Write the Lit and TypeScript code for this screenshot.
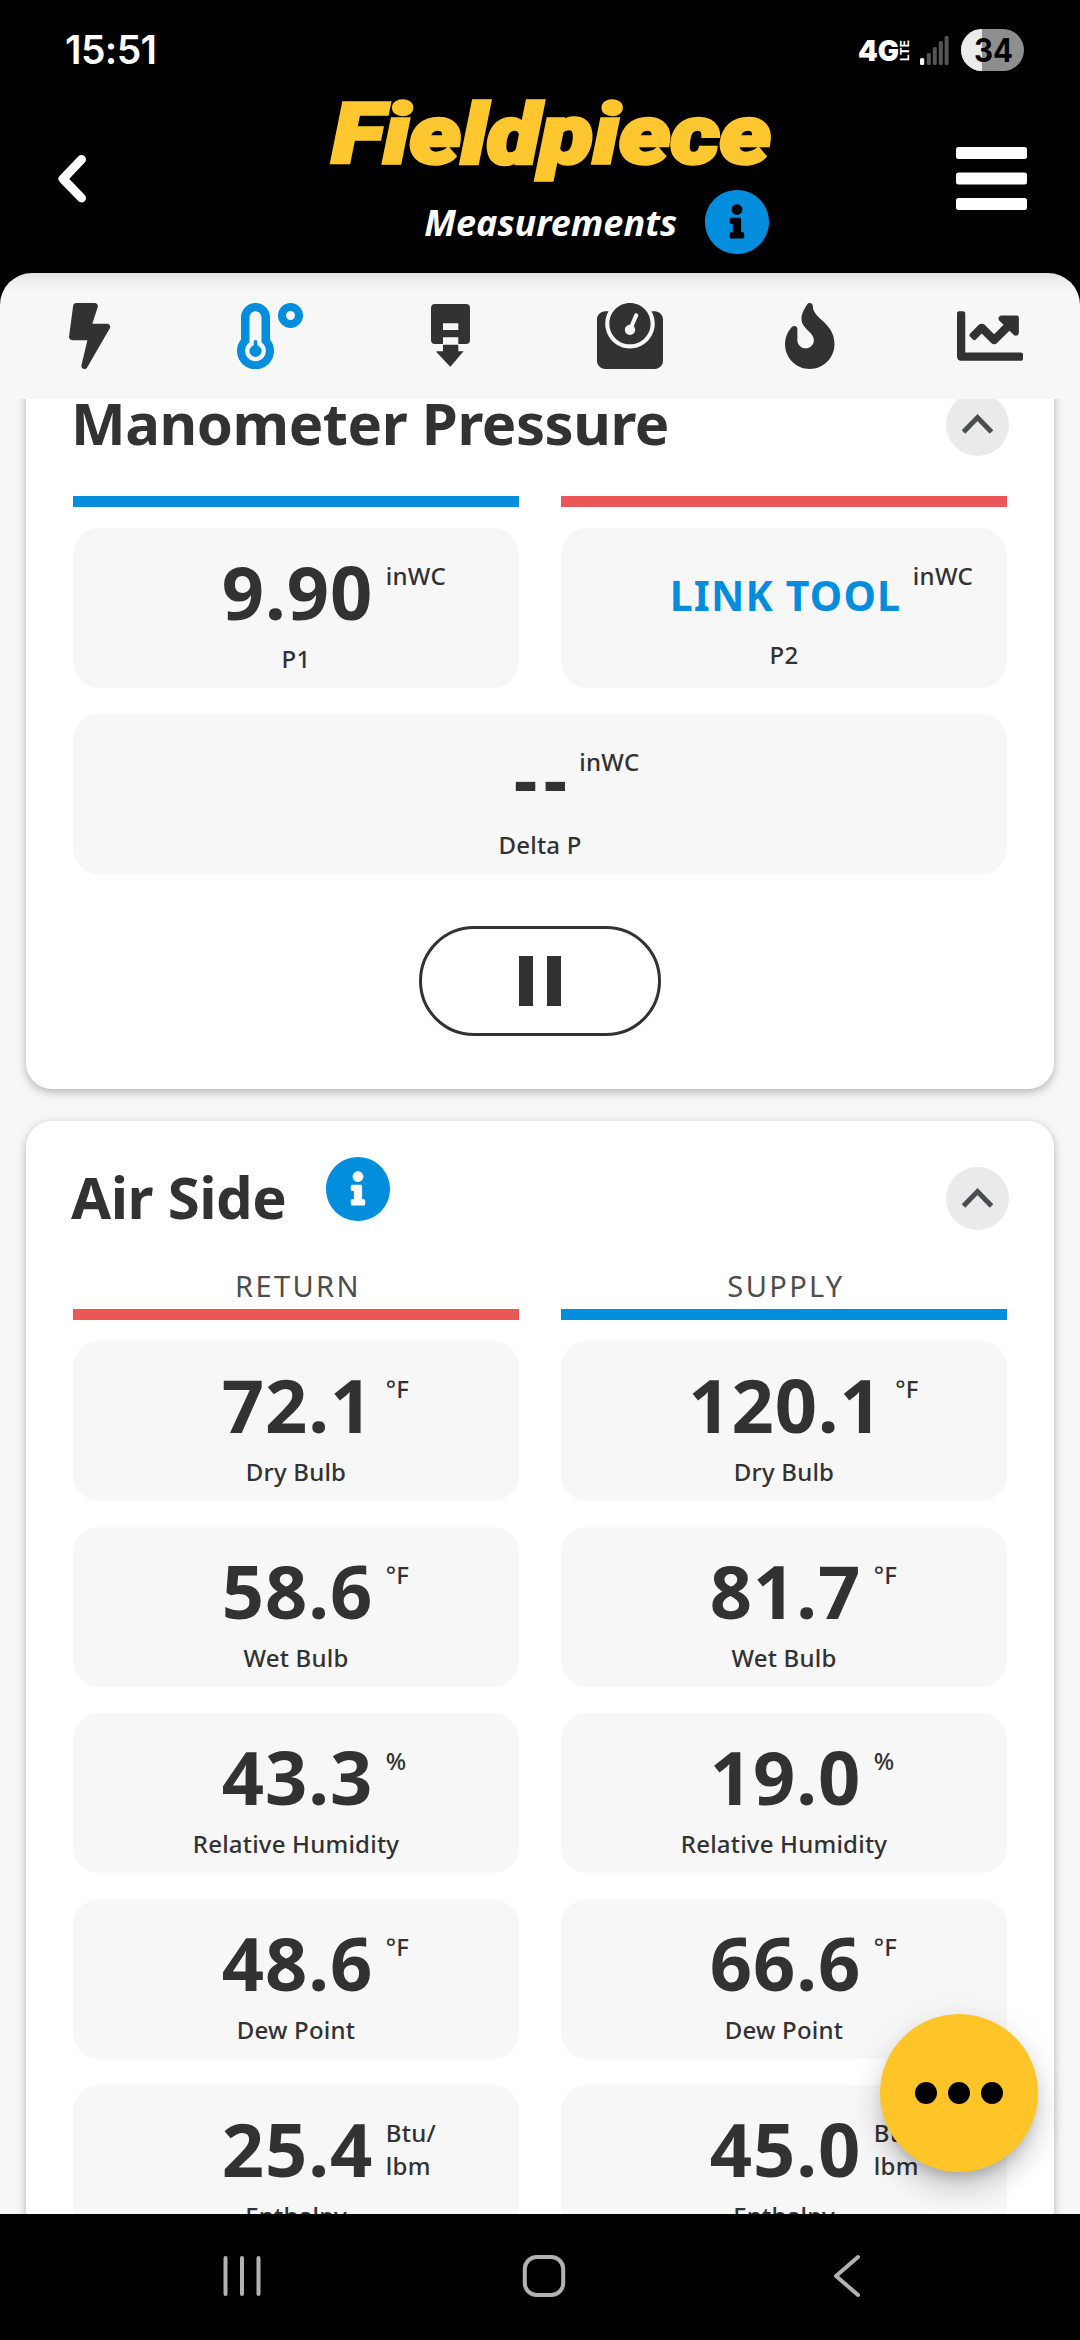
import { LitElement, html, css, svg, nothing } from "lit";
import { customElement, property } from "lit/decorators.js";

const BLUE = "#028ddd";
const INFO_PATH =
  "M256 8C119.043 8 8 119.083 8 256c0 136.997 111.043 248 248 248s248-111.003 248-248C504 119.083 392.957 8 256 8zm0 110c23.196 0 42 18.804 42 42s-18.804 42-42 42-42-18.804-42-42 18.804-42 42-42zm56 254c0 6.627-5.373 12-12 12h-88c-6.627 0-12-5.373-12-12v-24c0-6.627 5.373-12 12-12h12v-64h-12c-6.627 0-12-5.373-12-12v-24c0-6.627 5.373-12 12-12h64c6.627 0 12 5.373 12 12v100h12c6.627 0 12 5.373 12 12v24z";

const infoIcon = () => html`<svg width="64" height="64" viewBox="8 8 496 496" fill=${BLUE}><path d=${INFO_PATH}></path></svg>`;

interface Reading {
  value: string;
  unit: string[];
  label: string;
  kind?: "link" | "empty";
}

@customElement("reading-tile")
export class ReadingTile extends LitElement {
  @property({ attribute: false }) reading!: Reading;

  static styles = css`
    :host {
      display: block;
      height: 160px;
      box-sizing: border-box;
      padding-top: 14px;
      border-radius: 26px;
      background: #f7f7f7;
      color: #323232;
      text-align: center;
    }
    .line {
      display: grid;
      grid-template-columns: 1fr auto 1fr;
      height: 99px;
    }
    .value {
      grid-column: 2;
      margin-left: 3px;
      font-size: 74px;
      line-height: 99px;
      font-weight: 700;
      letter-spacing: 0.9px;
      white-space: nowrap;
    }
    .unit {
      grid-column: 3;
      justify-self: start;
      padding: 17px 0 0 12.5px;
      font-size: 24px;
      line-height: 33px;
      font-weight: 500;
      letter-spacing: 0.3px;
      text-align: left;
    }
    .label {
      font-size: 24px;
      line-height: 35px;
      font-weight: 500;
      letter-spacing: 0.2px;
    }
    .empty .value {
      margin-left: 7px;
      letter-spacing: 6px;
    }
    .empty .unit {
      padding-left: 6px;
    }
    .link .line {
      height: 95px;
    }
    .link .value {
      font-size: 41px;
      line-height: 107px;
      letter-spacing: 1.2px;
      color: #028ddd;
    }
    .link .unit {
      padding-left: 11.5px;
    }
  `;

  render() {
    const r = this.reading;
    return html`<div class=${r.kind ?? "plain"}>
      <div class="line">
        <span class="value">${r.value}</span>
        <span class="unit">${r.unit.map((u, i) => html`${i ? html`<br />` : nothing}${u}`)}</span>
      </div>
      <div class="label">${r.label}</div>
    </div>`;
  }
}

@customElement("section-card")
export class SectionCard extends LitElement {
  @property() heading = "";
  @property({ type: Boolean }) info = false;

  static styles = css`
    :host {
      display: block;
      border-radius: 26px;
      background: #fff;
      box-shadow: 0 3px 10px rgba(0, 0, 0, 0.28);
      padding: 0 47px;
    }
    .head {
      display: flex;
      align-items: center;
      height: 149px;
      box-sizing: border-box;
      padding: 5px 0 0;
    }
    .title {
      margin: -3px 0 0 -2px;
      font-size: 58px;
      line-height: 80px;
      font-weight: 700;
      letter-spacing: -0.45px;
      color: #323232;
      white-space: nowrap;
    }
    .info {
      display: flex;
      margin: -18px 0 0 40px;
    }
    .toggle {
      display: flex;
      margin: 0 -2px 0 auto;
    }
    svg {
      display: block;
    }
  `;

  render() {
    return html`<div class="head">
        <div class="title">${this.heading}</div>
        ${this.info ? html`<span class="info">${infoIcon()}</span>` : nothing}
        <span class="toggle">
          <svg width="63" height="63" viewBox="0 0 63 63">
            <circle cx="31.5" cy="31.5" r="31.5" fill="#eaeaea"></circle>
            <path d="M17.5 39L31.5 24.5L45.5 39" fill="none" stroke="#4b4d50" stroke-width="5"></path>
          </svg>
        </span>
      </div>
      <slot></slot>`;
  }
}

const AIR: Reading[] = [
  { value: "72.1", unit: ["°F"], label: "Dry Bulb" },
  { value: "120.1", unit: ["°F"], label: "Dry Bulb" },
  { value: "58.6", unit: ["°F"], label: "Wet Bulb" },
  { value: "81.7", unit: ["°F"], label: "Wet Bulb" },
  { value: "43.3", unit: ["%"], label: "Relative Humidity" },
  { value: "19.0", unit: ["%"], label: "Relative Humidity" },
  { value: "48.6", unit: ["°F"], label: "Dew Point" },
  { value: "66.6", unit: ["°F"], label: "Dew Point" },
  { value: "25.4", unit: ["Btu/", "lbm"], label: "Enthalpy" },
  { value: "45.0", unit: ["Btu/", "lbm"], label: "Enthalpy" },
];

const TABS = [
  svg`<svg width="41.25" height="66" viewBox="0 0 320 512"><path d="M296 160H180.6l42.6-129.8C227.2 15 215.7 0 200 0H56C44 0 33.8 8.9 32.2 20.8l-32 240C-1.7 275.2 9.5 288 24 288h118.7L96.6 482.5c-3.6 15.2 8 29.5 23.3 29.5 8.4 0 16.4-4.4 20.8-12l176-304c9.3-15.9-2.2-36-20.7-36z"/></svg>`,
  svg`<svg width="66" height="66" viewBox="0 0 66 66"><path fill="#028ddd" fill-rule="evenodd" d="M4 14.5a14.5 14.5 0 0 1 29 0V36.4a18.5 18.5 0 1 1-29 0ZM12.5 14.3V39.3a10.4 10.4 0 1 0 12 0V14.3a6 6 0 0 0-12 0Z"/><path fill="#028ddd" d="M16.7 38.8a1.8 1.8 0 0 1 3.6 0V42.2a6 6 0 1 1-3.6 0Z"/><circle cx="53.5" cy="12.5" r="8.5" fill="none" stroke="#028ddd" stroke-width="8"/></svg>`,
  svg`<svg width="39" height="66" viewBox="0 0 39 66"><path fill-rule="evenodd" d="M4 1H35a4 4 0 0 1 4 4V37a4 4 0 0 1-4 4H27.3V34.3H12V41H4a4 4 0 0 1-4-4V5A4 4 0 0 1 4 1ZM12 20.3H27.3V27H12Z"/><path d="M12 41.7H27.3V48.3H32.6L19.6 63.5Q19.3 63.8 19 63.5L5.6 49.3Q5 48.3 6 48.3H12Z"/></svg>`,
  svg`<svg width="66" height="66" viewBox="0 0 512 512"><path d="M448 64h-25.98C438.44 92.28 448 125.01 448 160c0 105.87-86.13 192-192 192S64 265.87 64 160c0-34.99 9.56-67.72 25.98-96H64C28.71 64 0 92.71 0 128v320c0 35.29 28.71 64 64 64h384c35.29 0 64-28.71 64-64V128c0-35.29-28.71-64-64-64zM256 320c88.37 0 160-71.63 160-160S344.37 0 256 0 96 71.63 96 160s71.63 160 160 160zm-.3-151.94l33.58-78.36c3.5-8.17 12.94-11.92 21.03-8.41 8.12 3.48 11.88 12.89 8.41 21l-33.67 78.55C291.73 188 296 197.45 296 208c0 22.09-17.91 40-40 40s-40-17.91-40-40c0-21.98 17.76-39.77 39.7-39.94z"/></svg>`,
  svg`<svg width="49.5" height="66" viewBox="0 0 384 512"><path d="M216 23.86c0-23.8-30.65-32.77-44.15-13.04C48 191.85 224 200 224 288c0 35.63-29.11 64.46-64.85 63.99-35.17-.45-63.15-29.77-63.15-64.94v-85.51c0-21.7-26.47-32.23-41.43-16.5C27.8 213.16 0 261.33 0 320c0 105.87 86.13 192 192 192s192-86.13 192-192c0-170.29-168-193-168-296.14z"/></svg>`,
  svg`<svg width="66" height="66" viewBox="0 0 512 512"><path d="M496 384H64V80c0-8.84-7.16-16-16-16H16C7.16 64 0 71.16 0 80v336c0 17.67 14.33 32 32 32h464c8.84 0 16-7.16 16-16v-32c0-8.84-7.16-16-16-16zM464 96H345.94c-21.38 0-32.09 25.85-16.97 40.97l32.4 32.4L288 242.75l-73.37-73.37c-12.5-12.5-32.76-12.5-45.25 0l-68.69 68.69c-6.25 6.25-6.25 16.38 0 22.63l22.62 22.62c6.25 6.25 16.38 6.25 22.63 0L192 237.25l73.37 73.37c12.5 12.5 32.76 12.5 45.25 0l96-96 32.4 32.4c15.12 15.12 40.97 4.41 40.97-16.97V112c.01-8.84-7.15-16-15.99-16z"/></svg>`,
];

@customElement("app-root")
export class AppRoot extends LitElement {
  static styles = css`
    :host {
      display: flex;
      flex-direction: column;
      position: relative;
      width: 1080px;
      height: 2340px;
      overflow: hidden;
      background: #000;
      color: #323232;
      font-family: "Noto Sans", "Open Sans", sans-serif;
    }
    svg {
      display: block;
    }
    .status {
      display: flex;
      align-items: flex-start;
      justify-content: space-between;
      height: 90px;
      flex: none;
      padding: 0 56px 0 65px;
      color: #fff;
    }
    .clock {
      margin-top: 26px;
      font-family: Inter, Roboto, sans-serif;
      font-size: 39px;
      line-height: 48px;
      font-weight: 600;
      letter-spacing: -0.6px;
    }
    .header {
      display: grid;
      grid-template-columns: 330px 441px 1fr;
      height: 183px;
      flex: none;
    }
    .back {
      padding: 65px 0 0 58px;
    }
    .brand {
      display: flex;
      flex-direction: column;
    }
    .logo {
      overflow: visible;
    }
    .sub {
      display: flex;
      justify-content: flex-end;
      align-items: center;
      height: 64px;
      margin: 0 2px 0 0;
      gap: 28px;
      color: #fff;
      font-size: 36px;
      line-height: 50px;
      font-weight: 700;
      font-style: italic;
    }
    .sub span {
      padding-top: 1px;
    }
    .menu {
      display: flex;
      justify-content: flex-end;
      padding: 57px 53px 0 0;
    }
    .tabs {
      display: grid;
      grid-template-columns: repeat(6, 180px);
      justify-items: center;
      height: 126px;
      flex: none;
      box-sizing: border-box;
      padding-top: 30px;
      border-radius: 32px 32px 0 0;
      background: linear-gradient(#e1e1e1, #f0f0f0 9px, #f7f7f7 19px);
      fill: #323232;
    }
    .content {
      flex: 1;
      min-height: 0;
      overflow: hidden;
      display: flex;
      flex-direction: column;
      gap: 32px;
      padding: 0 26px;
      background: #f7f7f7;
    }
    section-card {
      flex: none;
    }
    .first {
      margin-top: -52px;
      padding-bottom: 53px;
    }
    .grid {
      display: grid;
      grid-template-columns: 446px 446px;
      column-gap: 42px;
      row-gap: 26px;
    }
    .wide {
      grid-column: 1 / 3;
    }
    .bar {
      height: 11px;
      margin-bottom: -5px;
    }
    .red {
      background: #ea5756;
    }
    .blue {
      background: #028ddd;
    }
    .heads {
      display: grid;
      grid-template-columns: 446px 446px;
      column-gap: 42px;
      height: 39px;
      font-size: 29px;
      line-height: 32px;
      letter-spacing: 2.4px;
      text-align: center;
      color: #4d4d4d;
    }
    .heads span {
      padding-left: 4px;
    }
    .pause {
      display: flex;
      align-items: center;
      justify-content: center;
      gap: 14px;
      width: 242px;
      height: 110px;
      box-sizing: border-box;
      margin: 52px auto 0;
      border: 3px solid #323232;
      border-radius: 55px;
    }
    .pause i {
      width: 14px;
      height: 50px;
      background: #323232;
    }
    .nav {
      height: 126px;
      flex: none;
    }
    .fab {
      position: absolute;
      left: 880px;
      top: 2014px;
      width: 158px;
      height: 158px;
      border-radius: 50%;
      background: #fec428;
      box-shadow: 0 10px 14px -6px rgba(0, 0, 0, 0.2), 0 17px 28px rgba(0, 0, 0, 0.14), 0 6px 40px rgba(0, 0, 0, 0.08);
      clip-path: inset(-60px -60px -42px -60px);
      display: flex;
      align-items: center;
      justify-content: center;
      gap: 11px;
    }
    .fab i {
      width: 22px;
      height: 22px;
      border-radius: 50%;
      background: #000;
    }
  `;

  render() {
    return html`
      <div class="status">
        <span class="clock">15:51</span>
        <svg width="168" height="90" viewBox="856 0 168 90">
          <g fill="#fff" font-family="Inter, sans-serif" font-weight="900">
            <text x="858" y="61" font-size="28.5" textLength="41" lengthAdjust="spacingAndGlyphs">4G</text>
            <text transform="translate(908.5 61) rotate(-90)" x="0" y="0" font-size="12" font-weight="700" textLength="21" lengthAdjust="spacingAndGlyphs">LTE</text>
          </g>
          <g fill="#555">
            <rect x="920" y="58" width="4.2" height="7" rx="1.5" fill="#fff"></rect>
            <rect x="926.8" y="53" width="4" height="12" rx="1.5"></rect>
            <rect x="932.8" y="47" width="4" height="18" rx="1.5"></rect>
            <rect x="938.8" y="41" width="4" height="24" rx="1.5"></rect>
            <rect x="944.6" y="36" width="4" height="29" rx="1.5"></rect>
          </g>
          <rect x="961" y="29" width="63" height="42" rx="21" fill="#8e8e8e"></rect>
          <path d="M982 29A21 21 0 0 0 982 71Z" fill="#ebebeb"></path>
          <text x="974" y="62" font-family="Inter, sans-serif" font-size="32" font-weight="700" fill="#000" textLength="39" lengthAdjust="spacingAndGlyphs">34</text>
        </svg>
      </div>
      <div class="header">
        <div class="back">
          <svg width="28" height="48" viewBox="0 0 28 48"><path d="M23.5 4.5L5 23.8L23.5 43" fill="none" stroke="#fff" stroke-width="9" stroke-linecap="round" stroke-linejoin="round"></path></svg>
        </div>
        <div class="brand">
          <svg class="logo" width="441" height="100" viewBox="0 0 441 100">
            <text x="2" y="72.5" fill="#ffc72f" stroke="#ffc72f" stroke-width="3.5" font-family="Roboto, sans-serif" font-style="italic" font-weight="900" font-size="83" textLength="439" lengthAdjust="spacingAndGlyphs">Fieldpiece</text>
          </svg>
          <div class="sub"><span>Measurements</span>${infoIcon()}</div>
        </div>
        <div class="menu">
          <svg width="71" height="63" viewBox="0 0 71 63" fill="#fff">
            <rect width="71" height="12" rx="2.5"></rect>
            <rect y="25.5" width="71" height="12" rx="2.5"></rect>
            <rect y="51" width="71" height="12" rx="2.5"></rect>
          </svg>
        </div>
      </div>
      <div class="tabs">${TABS.map((t) => html`<span>${t}</span>`)}</div>
      <div class="content">
        <section-card class="first" heading="Manometer Pressure">
          <div class="grid">
            <div class="bar blue"></div>
            <div class="bar red"></div>
            <reading-tile .reading=${{ value: "9.90", unit: ["inWC"], label: "P1" }}></reading-tile>
            <reading-tile .reading=${{ value: "LINK TOOL", unit: ["inWC"], label: "P2", kind: "link" }}></reading-tile>
            <reading-tile class="wide" .reading=${{ value: "--", unit: ["inWC"], label: "Delta P", kind: "empty" }}></reading-tile>
          </div>
          <div class="pause"><i></i><i></i></div>
        </section-card>
        <section-card heading="Air Side" info>
          <div class="heads"><span>RETURN</span><span>SUPPLY</span></div>
          <div class="grid">
            <div class="bar red"></div>
            <div class="bar blue"></div>
            ${AIR.map((r) => html`<reading-tile .reading=${r}></reading-tile>`)}
          </div>
        </section-card>
      </div>
      <div class="nav">
        <svg width="1080" height="126" viewBox="0 2214 1080 126" fill="none" stroke="#b2b2b2" stroke-width="4" stroke-linecap="round" stroke-linejoin="round">
          <path d="M225.5 2258V2294M242 2258V2294M258.5 2258V2294"></path>
          <rect x="524.8" y="2257" width="38.4" height="38" rx="12"></rect>
          <path d="M858 2257L836 2276L858 2295"></path>
        </svg>
      </div>
      <div class="fab"><i></i><i></i><i></i></div>
    `;
  }
}
